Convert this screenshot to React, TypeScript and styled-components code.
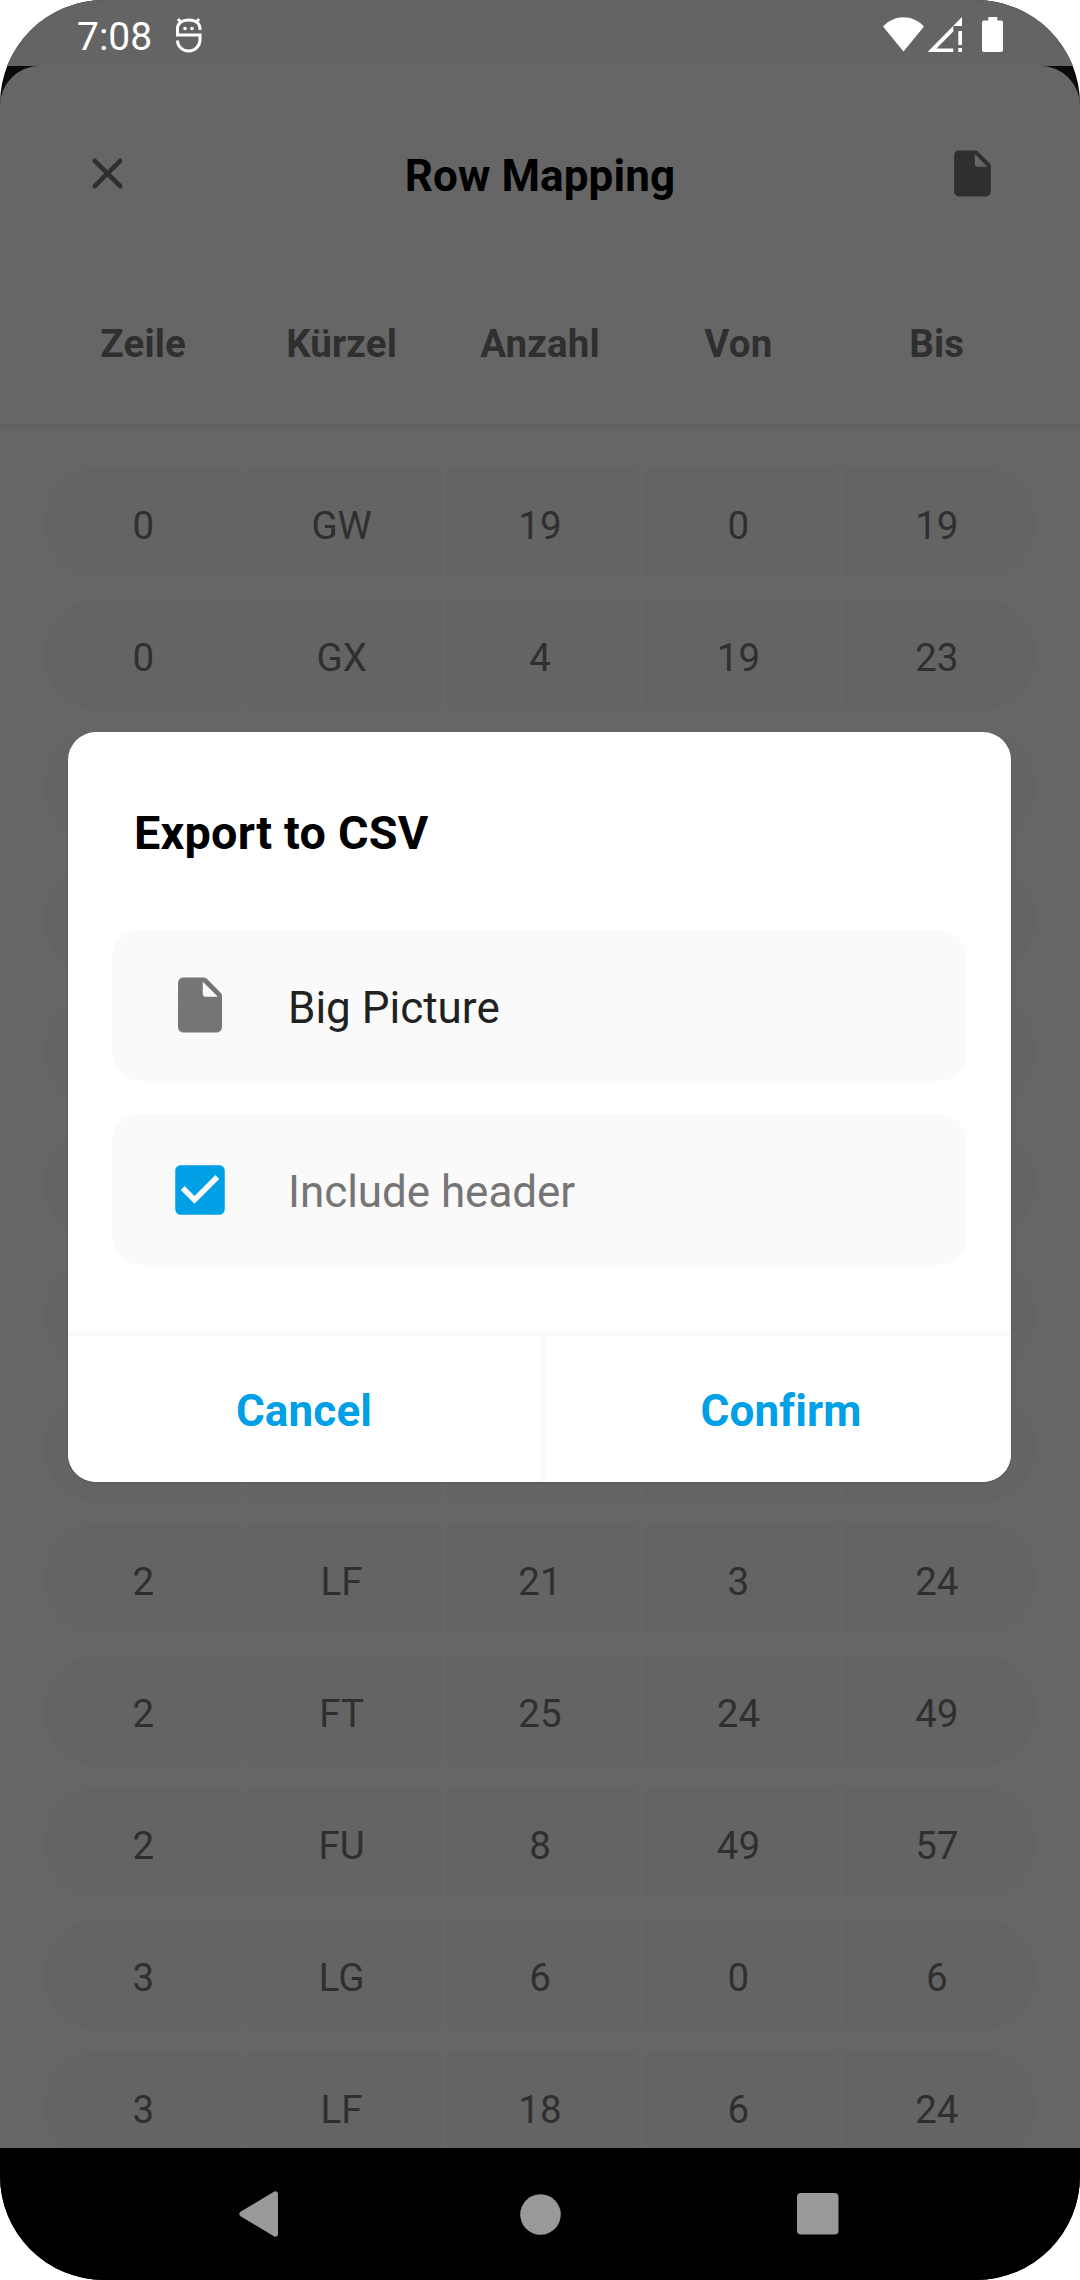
import React from "react";
import styled, { createGlobalStyle } from "styled-components";

const GlobalStyle = createGlobalStyle`
  * { box-sizing: border-box; }
  body { margin: 0; background: #fff; }
`;

const Phone = styled.div`
  position: relative;
  display: flex;
  flex-direction: column;
  width: 1080px;
  height: 2280px;
  overflow: hidden;
  border-radius: 104px;
  background: #0b0b0b;
  font-family: Roboto, "Liberation Sans", sans-serif;
`;

const StatusBar = styled.header`
  display: flex;
  align-items: center;
  flex: none;
  height: 66px;
  padding: 4px 76px 0 77px;
  background: #646464;
  color: #fff;
  svg { display: block; }
`;

const Clock = styled.span`
  flex: none;
  width: 98px;
  font-size: 39px;
  line-height: 46px;
  padding-top: 4px;
`;

const StatusIcons = styled.div`
  display: flex;
  align-items: flex-start;
  margin-left: auto;
`;

const Sheet = styled.main`
  display: flex;
  flex-direction: column;
  flex: none;
  height: 2082px;
  overflow: hidden;
  border-radius: 40px 40px 0 0;
  background: #666;
  color: #2f2f2f;
`;

const SheetHead = styled.div`
  flex: none;
  height: 358px;
  background: #666;
  box-shadow: 0 2px 8px rgba(0, 0, 0, 0.11);
`;

const TitleBar = styled.div`
  display: grid;
  grid-template-columns: 55px 1fr 55px;
  align-items: center;
  height: 215px;
  padding: 0 80px;
  svg { display: block; }
`;

const Title = styled.h1`
  margin: 4px 0 0;
  color: #000;
  font-size: 44px;
  font-weight: 700;
  letter-spacing: 0.1px;
  line-height: 52px;
  text-align: center;
`;

const Columns = styled.div`
  display: grid;
  grid-template-columns: repeat(5, 1fr);
  padding: 0 44px;
  margin-top: 40px;
`;

const ColumnName = styled.span`
  font-size: 38.5px;
  font-weight: 700;
  letter-spacing: 0.15px;
  line-height: 46px;
  text-align: center;
`;

const Rows = styled.div`
  display: flex;
  flex-direction: column;
  gap: 22px;
  padding: 44px 44px 0;
`;

const Row = styled.div`
  display: grid;
  grid-template-columns: repeat(5, 1fr);
  flex: none;
  height: 110px;
  overflow: hidden;
  border-radius: 55px;
  background: #646464;
`;

const Cell = styled.span`
  display: flex;
  align-items: center;
  justify-content: center;
  padding-top: 4px;
  font-size: 38.5px;
  & + & { box-shadow: inset 5.5px 0 #666; }
`;

const Dialog = styled.section`
  position: absolute;
  top: 732px;
  left: 68px;
  display: flex;
  flex-direction: column;
  width: 943px;
  height: 750px;
  overflow: hidden;
  border-radius: 28px;
  background: #fff;
  box-shadow: 0 1px 2px rgba(0, 0, 0, 0.15);
`;

const DialogBody = styled.div`
  display: flex;
  flex-direction: column;
  gap: 33px;
  height: 599px;
  padding: 73px 44px 0;
`;

const DialogTitle = styled.h2`
  margin: 0 0 36px;
  padding-left: 22px;
  color: #000;
  font-size: 46.75px;
  font-weight: 700;
  letter-spacing: 0.22px;
  line-height: 56px;
`;

const Field = styled.label<{ $muted?: boolean }>`
  display: flex;
  align-items: center;
  gap: 55px;
  flex: none;
  height: 151px;
  padding: 0 55px;
  border-radius: 28px;
  background: #fafafa;
  color: ${(p) => (p.$muted ? "#757575" : "#212121")};
  font-size: 44px;
  letter-spacing: ${(p) => (p.$muted ? "-0.05px" : "0")};
  svg { display: block; flex: none; margin-bottom: ${(p) => (p.$muted ? 0 : 2)}px; }
`;

const FieldText = styled.span`
  padding-top: 4px;
`;

const Actions = styled.div`
  display: grid;
  grid-template-columns: 472px 1fr;
  flex: 1;
  border-top: 5px solid #fafafa;
`;

const Action = styled.button`
  border: 0;
  padding: 4px 0 0;
  background: #fff;
  color: #00a0e6;
  font-family: inherit;
  font-size: 44px;
  font-weight: 700;
  letter-spacing: 0.15px;
  & + & {
    padding-left: 11px;
    box-shadow: inset 6px 0 #fafafa;
  }
`;

const NavBar = styled.nav`
  display: flex;
  align-items: center;
  justify-content: space-between;
  flex: none;
  height: 132px;
  padding: 0 241px 0 238px;
  background: #000;
  svg { display: block; }
`;

const HomeIcon = styled.svg`
  margin-left: 3px;
`;

function FileIcon({ size, color }: { size: number; color: string }) {
  return (
    <svg width={size} height={size} viewBox="0 0 24 24" fill={color}>
      <path d="M6 2c-1.1 0-1.99.9-1.99 2L4 20c0 1.1.89 2 1.99 2H18c1.1 0 2-.9 2-2V8.83c0-.53-.21-1.04-.59-1.41l-4.83-4.83c-.37-.38-.88-.59-1.41-.59H6zm7 6V3.5L18.5 9H14c-.55 0-1-.45-1-1z" />
    </svg>
  );
}

const CloseIcon = () => (
  <svg width="55" height="55" viewBox="0 0 55 55" stroke="#2f2f2f" strokeWidth="4.6" strokeLinecap="round">
    <path d="M14.8 14.8l25.4 25.4M40.2 14.8L14.8 40.2" />
  </svg>
);

const CheckedIcon = () => (
  <svg width="66" height="66" viewBox="0 0 24 24" fill="#00a0e6">
    <path d="M19 3H5c-1.11 0-2 .9-2 2v14c0 1.1.89 2 2 2h14c1.11 0 2-.9 2-2V5c0-1.1-.89-2-2-2zm-9 14l-5-5 1.41-1.41L10 14.17l7.59-7.59L19 8l-9 9z" />
  </svg>
);

const MascotIcon = () => (
  <svg width="27" height="36" viewBox="0 0 27 36" fill="none" stroke="#fff" strokeWidth="3">
    <path d="M25 13v-1.500C25 6 20 3 13.500 3S2.500 6 2.500 12v6H25v4.500C25 29 20 34 13.500 34S2.500 29 2.500 23.500" />
    <path d="M3 2l3.500 4M24 2l-3.500 4" />
    <g fill="#fff" stroke="none">
      <circle cx="10" cy="11.500" r="1.800" />
      <circle cx="17" cy="11.500" r="1.800" />
    </g>
  </svg>
);

const WifiIcon = () => (
  <svg width="45" height="36" viewBox="0 0 45 36" fill="#fff">
    <path d="M0 9.500C5.500 3.500 13 .2 20.500 .2S35.500 3.500 41 9.500L20.500 34.500z" />
  </svg>
);

const SignalIcon = () => (
  <svg width="54" height="36" viewBox="0 0 54 36" fill="#fff">
    <path fillRule="evenodd" d="M34 0v9h-8.700v5.500L8.500 31.500H25.300V35H-.500zM30.300 14H34v14h-3.700zM30.300 31H34v4h-3.700z" />
  </svg>
);

const BatteryIcon = () => (
  <svg width="22" height="36" viewBox="0 0 22 36" fill="#fff">
    <path d="M6.300 0h9v3.500H19a2 2 0 0 1 2 2V33a2 2 0 0 1-2 2H2a2 2 0 0 1-2-2V5.500a2 2 0 0 1 2-2h4.300z" />
  </svg>
);

const columns = ["Zeile", "Kürzel", "Anzahl", "Von", "Bis"];
const blank = ["", "", "", "", ""];

const rows: string[][] = [
  ["0", "GW", "19", "0", "19"],
  ["0", "GX", "4", "19", "23"],
  blank,
  blank,
  blank,
  blank,
  blank,
  blank,
  ["2", "LF", "21", "3", "24"],
  ["2", "FT", "25", "24", "49"],
  ["2", "FU", "8", "49", "57"],
  ["3", "LG", "6", "0", "6"],
  ["3", "LF", "18", "6", "24"],
];

export default function App() {
  return (
    <>
      <GlobalStyle />
      <Phone>
        <StatusBar>
          <Clock>7:08</Clock>
          <MascotIcon />
          <StatusIcons>
            <WifiIcon />
            <SignalIcon />
            <BatteryIcon />
          </StatusIcons>
        </StatusBar>
        <Sheet>
          <SheetHead>
            <TitleBar>
              <CloseIcon />
              <Title>Row Mapping</Title>
              <FileIcon size={55} color="#2f2f2f" />
            </TitleBar>
            <Columns>
              {columns.map((name) => (
                <ColumnName key={name}>{name}</ColumnName>
              ))}
            </Columns>
          </SheetHead>
          <Rows>
            {rows.map((cells, r) => (
              <Row key={r}>
                {cells.map((value, c) => (
                  <Cell key={c}>{value}</Cell>
                ))}
              </Row>
            ))}
          </Rows>
        </Sheet>
        <NavBar>
          <svg width="42" height="46" viewBox="0 0 42 46" fill="#999">
            <path d="M2.500 20.800L35.800.700q4-1.700 4.200 2.300v40q-.200 4-4.200 2.300L2.500 25.200q-2.500-2.200 0-4.400z" />
          </svg>
          <HomeIcon width="41" height="41" viewBox="0 0 41 41" fill="#999">
            <circle cx="20.500" cy="20.500" r="20.300" />
          </HomeIcon>
          <svg width="42" height="42" viewBox="0 0 42 42" fill="#999">
            <rect width="41.500" height="41.500" rx="4" />
          </svg>
        </NavBar>
        <Dialog>
          <DialogBody>
            <DialogTitle>Export to CSV</DialogTitle>
            <Field>
              <FileIcon size={66} color="#757575" />
              <FieldText>Big Picture</FieldText>
            </Field>
            <Field $muted>
              <CheckedIcon />
              <FieldText>Include header</FieldText>
            </Field>
          </DialogBody>
          <Actions>
            <Action>Cancel</Action>
            <Action>Confirm</Action>
          </Actions>
        </Dialog>
      </Phone>
    </>
  );
}
